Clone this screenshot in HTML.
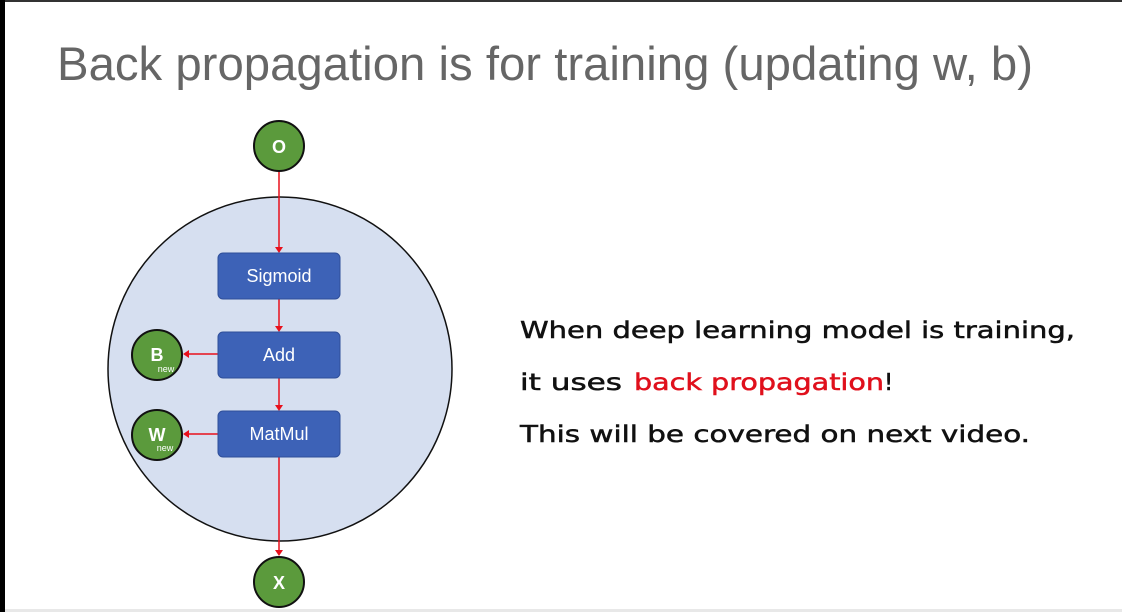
<!DOCTYPE html>
<html><head><meta charset="utf-8"><style>
html,body{margin:0;padding:0;background:#fff;}
svg{display:block;}
</style></head><body>
<svg width="1122" height="612" viewBox="0 0 1122 612" xmlns="http://www.w3.org/2000/svg">
<rect width="1122" height="612" fill="#fff"/>
<rect x="0" y="0" width="1122" height="2" fill="#333"/>
<rect x="0" y="0" width="5" height="612" fill="#000"/>
<rect x="5" y="609" width="1117" height="3" fill="#e8e8e8"/>
<text x="57" y="80" font-family="Liberation Sans, sans-serif" font-size="47" fill="#666" textLength="976" lengthAdjust="spacingAndGlyphs">Back propagation is for training (updating w, b)</text>

<circle cx="280" cy="369" r="172" fill="#d6dff0" stroke="#111" stroke-width="1.5"/>
<g stroke="#e8101c" stroke-width="1.5" fill="#e8101c">
<line x1="279" y1="171" x2="279" y2="248"/><path d="M275 247 L283 247 L279 253Z" stroke="none"/>
<line x1="279" y1="299" x2="279" y2="327"/><path d="M275 326 L283 326 L279 332Z" stroke="none"/>
<line x1="279" y1="378" x2="279" y2="406"/><path d="M275 405 L283 405 L279 411Z" stroke="none"/>
<line x1="279" y1="457" x2="279" y2="551"/><path d="M275 550 L283 550 L279 556Z" stroke="none"/>
<line x1="218" y1="354" x2="188" y2="354"/><path d="M189 350 L189 358 L183 354Z" stroke="none"/>
<line x1="218" y1="434" x2="188" y2="434"/><path d="M189 430 L189 438 L183 434Z" stroke="none"/>
</g>
<g fill="#3d62b7" stroke="#2f4f9a" stroke-width="1">
<rect x="218" y="253" width="122" height="46" rx="5"/>
<rect x="218" y="332" width="122" height="46" rx="5"/>
<rect x="218" y="411" width="122" height="46" rx="5"/>
</g>
<g font-family="Liberation Sans, sans-serif" font-size="18" fill="#fff" text-anchor="middle">
<text x="279" y="282">Sigmoid</text>
<text x="279" y="361">Add</text>
<text x="279" y="440">MatMul</text>
</g>
<g fill="#5b9a3c" stroke="#111" stroke-width="2">
<circle cx="279" cy="146" r="25"/>
<circle cx="279" cy="582" r="25"/>
<circle cx="157" cy="355" r="25"/>
<circle cx="157" cy="435" r="25"/>
</g>
<g font-family="Liberation Sans, sans-serif" font-weight="bold" fill="#fff" text-anchor="middle">
<text x="279" y="153" font-size="18">O</text>
<text x="279" y="589" font-size="18">X</text>
<text x="157" y="361" font-size="18">B</text>
<text x="157" y="441" font-size="18">W</text>
</g>
<g font-family="Liberation Sans, sans-serif" font-size="9" fill="#fff" text-anchor="middle">
<text x="166" y="372">new</text>
<text x="165" y="451">new</text>
</g>
<g font-family="DejaVu Sans, sans-serif" font-size="23" fill="#111" stroke="#111" stroke-width="0.5">
<text x="520" y="338" textLength="555" lengthAdjust="spacingAndGlyphs">When deep learning model is training,</text>
<text x="520" y="390" textLength="102" lengthAdjust="spacingAndGlyphs">it uses</text>
<text x="634" y="390" fill="#e0101c" stroke="#e0101c" textLength="250" lengthAdjust="spacingAndGlyphs">back propagation</text>
<text x="884" y="390">!</text>
<text x="520" y="442" textLength="510" lengthAdjust="spacingAndGlyphs">This will be covered on next video.</text>
</g>
</svg>
</body></html>
